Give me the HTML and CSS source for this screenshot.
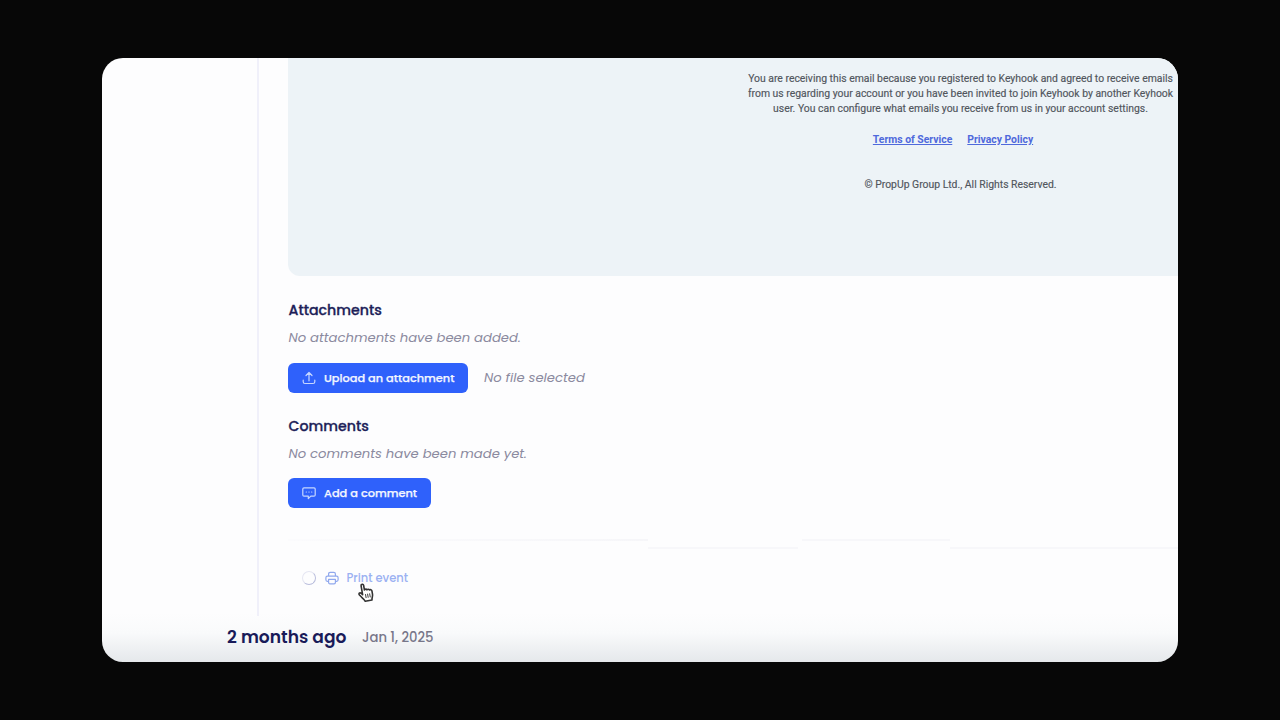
FILE: index.html
```html
<!DOCTYPE html>
<html lang="en">
<head>
<meta charset="utf-8">
<title>Event timeline</title>
<link rel="stylesheet" href="styles.css">
</head>
<body>
<main class="frame">
  <article class="event">
    <section class="email">
      <p class="notice">You are receiving this email because you registered to Keyhook and agreed to receive emails<br>from us regarding your account or you have been invited to join Keyhook by another Keyhook<br>user. You can configure what emails you receive from us in your account settings.</p>
      <nav class="links"><a>Terms of Service</a><a>Privacy Policy</a></nav>
      <p class="copyright">© PropUp Group Ltd., All Rights Reserved.</p>
    </section>
    <section class="block">
      <h2 class="title">Attachments</h2>
      <p class="empty">No attachments have been added.</p>
      <div class="actions">
        <button class="button upload">
          <svg class="icon" viewBox="0 0 14 14"><path d="M7 9.800V1.600M4 4.500l3-3 3 3M1.200 9.200v1.500c0 1.100.7 1.800 1.800 1.800h8c1.100 0 1.800-.7 1.800-1.800V9.200"/></svg>
          <span>Upload an attachment</span>
        </button>
        <span class="empty">No file selected</span>
      </div>
    </section>
    <section class="block comments">
      <h2 class="title">Comments</h2>
      <p class="empty">No comments have been made yet.</p>
      <div class="actions">
        <button class="button comment">
          <svg class="icon" viewBox="0 0 14 14"><path d="M2 1.800h10c.7 0 1.200.5 1.200 1.200v6c0 .7-.5 1.200-1.200 1.200H8.800L6.300 12.700v-2.500H2C1.300 10.200.8 9.700.8 9V3c0-.7.5-1.200 1.200-1.200zM4.200 6h.2M6.900 6h.2M9.600 6h.2"/></svg>
          <span>Add a comment</span>
        </button>
      </div>
    </section>
    <div class="divider"><i class="seg first"></i><i class="seg low"></i><i class="seg mid"></i><i class="seg low last"></i></div>
    <div class="print">
      <span class="spinner"></span>
      <svg class="printer" viewBox="0 0 14 14"><path d="M3.600 5.200V3c0-1 .6-1.700 1.600-1.700h3.600c1 0 1.600.7 1.600 1.700v2.200M3.600 10.300H2.400c-.9 0-1.500-.6-1.500-1.500V6.700c0-.9.6-1.500 1.500-1.500h9.200c.9 0 1.500.6 1.500 1.500v2.100c0 .9-.6 1.500-1.500 1.500h-1.200M3.600 8.300h6.800v3.200c0 .8-.5 1.300-1.300 1.300H4.900c-.8 0-1.300-.5-1.300-1.300z"/></svg>
      <span class="print-label">Print event</span>
      <svg class="cursor" viewBox="0 0 18 21"><path d="M5.300 12V3.200c0-2 2.600-2 2.600 0v4.600c.6-1 2.200-.8 2.500.3.700-.8 2.100-.5 2.400.5.900-.6 2.300 0 2.300 1.400v3.500c0 2-1.300 3-1.500 5.500H6.700C6.300 16.700 4 15 2.300 12.200c-1.400-2.200.7-3.200 2-1.500z"/><path class="fingers" d="M8.200 12v4M10.300 12v4M12.400 12v4"/></svg>
    </div>
  </article>
  <footer class="date"><strong class="ago">2 months ago</strong><span class="day">Jan 1, 2025</span></footer>
</main>
</body>
</html>
```
FILE: styles.css
```css
* { box-sizing: border-box; }
body {
  margin: 0;
  height: 720px;
  padding: 58px 102px;
  background: #070707;
  overflow: hidden;
  font-family: Poppins, Inter, sans-serif;
}
p, h2 { margin: 0; }
.frame {
  width: 1076px;
  height: 604px;
  overflow: hidden;
  border-radius: 21px;
  background: linear-gradient(#fdfdfe 0, #fdfdfe 555px, #f9fafb 575px, #e5e8eb 604px);
}
.event {
  height: 558px;
  margin-left: 155px;
  padding-left: 29px;
  border-left: 2px solid #f0f0fa;
}
.email {
  width: 1345px;
  height: 218px;
  padding-top: 13px;
  border-radius: 0 0 0 12px;
  background: #edf3f7;
  color: #51565d;
  text-align: center;
  font: 10.400px/15.200px Roboto, sans-serif;
  -webkit-text-stroke: 0.150px currentColor;
  white-space: nowrap;
}
.links { margin-top: 15px; font-weight: 700; -webkit-text-stroke: 0; }
.links a { margin-right: 15px; color: #4f69dc; text-decoration: underline; }
.copyright { margin-top: 30px; }
.block { height: 115.500px; padding-top: 24px; }
.title {
  height: 21px;
  padding-left: 0.500px;
  font-size: 14.200px;
  line-height: 21px;
  font-weight: 500;
  color: #1d1f59;
  -webkit-text-stroke: 0.300px #1d1f59;
  white-space: nowrap;
}
.empty { font-size: 13.180px; line-height: 20px; font-style: italic; color: #8b8a9f; white-space: nowrap; }
p.empty { margin-top: 7px; padding-left: 0.500px; }
.actions { display: flex; align-items: center; gap: 16px; margin-top: 15px; }
.comments .actions { margin-top: 14px; }
.button {
  display: flex;
  align-items: center;
  gap: 8px;
  height: 30px;
  padding: 0 0 0 14px;
  border: 0;
  border-radius: 6px;
  background: #2f61fb;
  color: #f3f6ff;
  font: 500 11.350px/30px Poppins, Inter, sans-serif;
  -webkit-text-stroke: 0.250px #f3f6ff;
  white-space: nowrap;
}
.upload { width: 180px; }
.comment { width: 143px; }
.icon, .printer { flex: none; width: 14px; height: 14px; fill: none; stroke: #c6d7ff; stroke-width: 1.200; stroke-linecap: round; stroke-linejoin: round; }
.divider { display: flex; height: 10px; margin-top: 32px; }
.seg { height: 2px; background: #f7f7fa; }
.first { width: 360px; background: linear-gradient(90deg, #fbfbfd, #f6f6f9); }
.low { width: 151px; margin-top: 8px; }
.mid { width: 148px; margin-left: 4px; }
.last { width: 228px; }
.print { position: relative; display: flex; align-items: center; height: 20px; margin-top: 19px; padding-left: 14px; }
.spinner { width: 14px; height: 14px; border: 1.500px solid #e5e6f2; border-right-color: #b9bddc; border-bottom-color: #b9bddc; border-radius: 50%; }
.printer { margin-left: 9px; stroke: #90a8ed; }
.print-label { margin-left: 7.500px; font-size: 11.500px; line-height: 20px; font-weight: 500; color: #9bb1f2; white-space: nowrap; }
.cursor { position: absolute; left: 69px; top: 14px; width: 18px; height: 21px; fill: #fff; stroke: #333; stroke-width: 1.600; stroke-linejoin: round; transform: rotate(-10deg); }
.fingers { stroke-width: 0.900; }
.date { display: flex; align-items: center; height: 42px; padding-left: 125px; color: #191b59; white-space: nowrap; }
.ago { width: 135px; font-size: 17.100px; font-weight: 600; }
.day { padding-top: 1px; font-size: 13.200px; font-weight: 500; color: #777689; }
```
